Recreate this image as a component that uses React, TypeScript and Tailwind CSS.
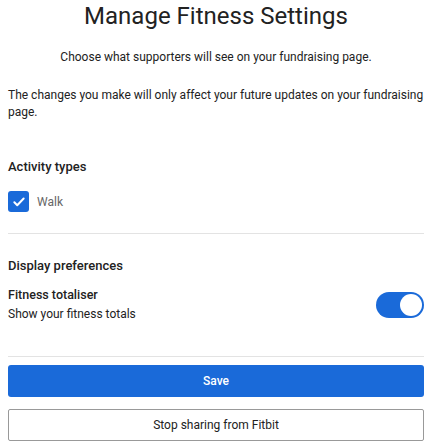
import React, { useState } from 'react';

const App: React.FC = () => {
  const [walk, setWalk] = useState(true);
  const [totaliser, setTotaliser] = useState(true);

  return (
    <div
      className="w-[435px] bg-white text-[#222] pl-2 pr-[11px]"
      style={{ fontFamily: 'Roboto, "Liberation Sans", sans-serif' }}
    >
      <h1 className="text-center text-[24px] leading-[28px] pt-[2px]">Manage Fitness Settings</h1>
      <p className="text-center text-[12px] leading-4 mt-[19px]">
        Choose what supporters will see on your fundraising page.
      </p>
      <p className="text-[12px] leading-[17px] mt-[22px]">
        The changes you make will only affect your future updates on your fundraising page.
      </p>

      {/* Activity types */}
      <h2 className="text-[13px] font-medium leading-5 mt-[36px]">Activity types</h2>
      <label className="flex items-center gap-2 mt-[14px] cursor-pointer">
        <button
          className={`w-[21px] h-[21px] rounded-[3px] flex items-center justify-center ${walk ? 'bg-[#1a6ad9]' : 'border border-gray-400'}`}
          onClick={() => setWalk(!walk)}
        >
          {walk && (
            <svg width="14" height="14" viewBox="0 0 24 24" fill="none">
              <path d="M4 12.5l5 5L20 6" stroke="white" strokeWidth="3.4" strokeLinecap="round" strokeLinejoin="round" />
            </svg>
          )}
        </button>
        <span className="text-[12px] text-[#666]">Walk</span>
      </label>
      <div className="border-t border-[#e3e3e3] mt-[21px]" />

      {/* Display preferences */}
      <h2 className="text-[13px] font-medium leading-5 mt-[22px]">Display preferences</h2>
      <div className="flex items-center justify-between mt-[11px]">
        <div>
          <div className="text-[12.5px] font-medium leading-4">Fitness totaliser</div>
          <div className="text-[12px] leading-4 mt-[3px]">Show your fitness totals</div>
        </div>
        <button
          className={`w-[48px] h-[26px] rounded-full p-[2px] flex ${totaliser ? 'bg-[#1a6ad9] justify-end' : 'bg-gray-300 justify-start'}`}
          onClick={() => setTotaliser(!totaliser)}
        >
          <span className="w-[22px] h-[22px] rounded-full bg-white block" />
        </button>
      </div>
      <div className="border-t border-[#e3e3e3] mt-[34px]" />

      <button className="w-full h-[32px] mt-[8px] rounded-[3px] bg-[#1a6ad9] text-white text-[12px] font-medium">
        Save
      </button>
      <button className="w-full h-[32px] mt-[12px] rounded-[2px] border border-[#999] bg-white text-[12px] text-[#222]">
        Stop sharing from Fitbit
      </button>
    </div>
  );
};

export default App;
